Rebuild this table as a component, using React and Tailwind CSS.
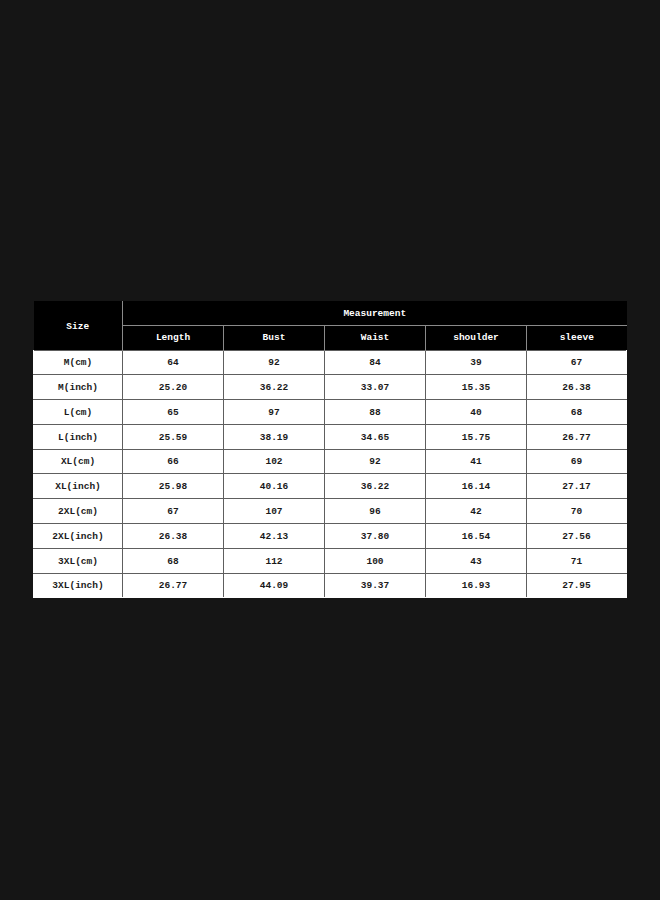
const cols = ['Length', 'Bust', 'Waist', 'shoulder', 'sleeve']

const rows = [
  ['M(cm)', '64', '92', '84', '39', '67'],
  ['M(inch)', '25.20', '36.22', '33.07', '15.35', '26.38'],
  ['L(cm)', '65', '97', '88', '40', '68'],
  ['L(inch)', '25.59', '38.19', '34.65', '15.75', '26.77'],
  ['XL(cm)', '66', '102', '92', '41', '69'],
  ['XL(inch)', '25.98', '40.16', '36.22', '16.14', '27.17'],
  ['2XL(cm)', '67', '107', '96', '42', '70'],
  ['2XL(inch)', '26.38', '42.13', '37.80', '16.54', '27.56'],
  ['3XL(cm)', '68', '112', '100', '43', '71'],
  ['3XL(inch)', '26.77', '44.09', '39.37', '16.93', '27.95'],
]

export default function App() {
  return (
    <div className="min-h-[900px] bg-[#151515] pt-[301px] pl-[33px] font-['Liberation_Mono',monospace] text-[9.5px] font-bold">
      <table className="w-[593px] table-fixed border-collapse">
        <colgroup>
          <col className="w-[89px]" />
          <col className="w-[101px]" />
          <col className="w-[101px]" />
          <col className="w-[101px]" />
          <col className="w-[101px]" />
          <col className="w-[100px]" />
        </colgroup>
        <thead className="bg-black text-white">
          <tr className="h-[24px]">
            <th rowSpan={2} className="border-r border-[#8a8a8a] p-0 pt-[3px] text-center font-bold">
              Size
            </th>
            <th colSpan={5} className="border-b border-[#8a8a8a] p-0 pt-[2px] text-center font-bold">
              Measurement
            </th>
          </tr>
          <tr className="h-[25px]">
            {cols.map((c) => (
              <th key={c} className="border-l border-[#8a8a8a] p-0 pt-[2px] text-center font-bold">
                {c}
              </th>
            ))}
          </tr>
        </thead>
        <tbody className="bg-white text-[#1a1a1a]">
          {rows.map((r) => (
            <tr key={r[0]} className="h-[24.8px] last:[&>td]:border-b-white">
              {r.map((v, i) => (
                <td
                  key={i}
                  className="border border-[#5e5e5e] p-0 pt-[2px] text-center first:border-l-white last:border-r-white"
                >
                  {v}
                </td>
              ))}
            </tr>
          ))}
        </tbody>
      </table>
    </div>
  )
}
